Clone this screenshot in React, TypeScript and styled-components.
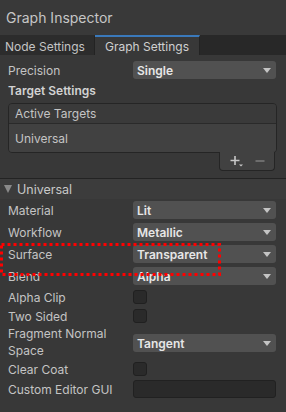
import React from 'react';
import styled, { createGlobalStyle } from 'styled-components';

const GlobalStyle = createGlobalStyle`
  html, body {
    margin: 0;
    padding: 0;
    background: #383838;
  }
  * {
    box-sizing: border-box;
  }
`;

const Panel = styled.div`
  position: relative;
  width: 286px;
  height: 412px;
  overflow: hidden;
  background: #383838;
  font-family: Inter, 'Noto Sans', sans-serif;
  font-size: 12px;
  color: #c4c4c4;
`;

const TitleBar = styled.div`
  height: 35px;
  padding-left: 6px;
  display: flex;
  align-items: center;
  font-size: 14px;
  color: #c6c6c6;
  background: #393939;
`;

const TabBar = styled.div`
  height: 20px;
  display: flex;
  background: #282828;
`;

const Tab = styled.div<{ $active?: boolean }>`
  height: 20px;
  display: flex;
  align-items: center;
  white-space: nowrap;
  padding: ${({ $active }) => ($active ? '0 0 0 10px' : '0 0 0 5px')};
  width: ${({ $active }) => ($active ? '105px' : '95px')};
  background: ${({ $active }) => ($active ? '#383838' : '#2c2c2c')};
  border-top: 2px solid ${({ $active }) => ($active ? '#3a79bb' : 'transparent')};
  border-right: 1px solid #232323;
  font-size: 12px;
  color: ${({ $active }) => ($active ? '#d0d0d0' : '#c4c4c4')};
`;

const Content = styled.div`
  padding: 4px 0 0 0;
`;

const Row = styled.div<{ $h?: number }>`
  height: ${({ $h }) => $h ?? 22}px;
  display: flex;
  align-items: center;
  padding: 0 10px 0 8px;
`;

const Label = styled.div<{ $top?: boolean }>`
  width: 125px;
  flex-shrink: 0;
  line-height: 17px;
  white-space: nowrap;
  align-self: ${({ $top }) => ($top ? 'flex-start' : 'auto')};
  color: #c4c4c4;
`;

const Dropdown = styled.div`
  flex: 1;
  height: 18px;
  border-radius: 3px;
  background: #515151;
  display: flex;
  align-items: center;
  justify-content: space-between;
  padding: 0 5px 0 4px;
  font-weight: 600;
  color: #e6e6e6;
`;

const Arrow = styled.span`
  width: 0;
  height: 0;
  border-left: 4px solid transparent;
  border-right: 4px solid transparent;
  border-top: 5px solid #c4c4c4;
`;

const Checkbox = styled.div`
  width: 14px;
  height: 14px;
  border-radius: 3px;
  background: #2a2a2a;
  border: 1px solid #202020;
`;

const TextField = styled.div`
  flex: 1;
  height: 18px;
  border-radius: 3px;
  background: #2a2a2a;
  border: 1px solid #212121;
`;

const SectionTitle = styled.div`
  height: 18px;
  padding-left: 8px;
  display: flex;
  align-items: center;
  font-weight: 600;
  color: #d2d2d2;
`;

const TargetList = styled.div`
  margin: 4px 9px 0 8px;
`;

const ListBox = styled.div`
  border: 1px solid #252525;
  border-radius: 4px;
  overflow: hidden;
`;

const ListHeader = styled.div`
  height: 20px;
  padding-left: 6px;
  display: flex;
  align-items: center;
  background: #3a3a3a;
  border-bottom: 1px solid #2a2a2a;
`;

const ListBody = styled.div`
  height: 28px;
  padding-left: 6px;
  display: flex;
  align-items: center;
  background: #414141;
`;

const ListFooter = styled.div`
  display: flex;
  justify-content: flex-end;
  padding-right: 2px;
`;

const FooterButtons = styled.div`
  width: 56px;
  height: 19px;
  margin-top: -1px;
  background: #414141;
  border: 1px solid #252525;
  border-top: none;
  border-radius: 0 0 4px 4px;
  display: flex;
  align-items: center;
  justify-content: space-around;
  padding: 0 4px;
`;

const IconButton = styled.span<{ $disabled?: boolean }>`
  display: flex;
  align-items: center;
  color: ${({ $disabled }) => ($disabled ? '#787878' : '#c8c8c8')};
`;

const Divider = styled.div`
  height: 1px;
  margin-top: 7px;
  background: #232323;
`;

const Foldout = styled.div`
  height: 20px;
  display: flex;
  align-items: center;
  gap: 4px;
  padding-left: 4px;
  background: #3c3c3c;
  font-size: 12.5px;
  color: #c8c8c8;
`;

const FoldArrow = styled.span`
  width: 0;
  height: 0;
  border-left: 4.5px solid transparent;
  border-right: 4.5px solid transparent;
  border-top: 8px solid #8a8a8a;
  margin-right: 1px;
`;

const Highlight = styled.svg`
  position: absolute;
  left: 0;
  top: 243px;
  width: 222px;
  height: 34px;
  pointer-events: none;
`;

const DropRow: React.FC<{ label: string; value: string }> = ({ label, value }) => (
  <Row>
    <Label>{label}</Label>
    <Dropdown>
      {value}
      <Arrow />
    </Dropdown>
  </Row>
);

const CheckRow: React.FC<{ label: string; h: number }> = ({ label, h }) => (
  <Row $h={h}>
    <Label>{label}</Label>
    <Checkbox />
  </Row>
);

export default function App() {
  return (
    <Panel>
      <GlobalStyle />
      <TitleBar>Graph Inspector</TitleBar>
      <TabBar>
        <Tab>Node Settings</Tab>
        <Tab $active>Graph Settings</Tab>
      </TabBar>

      <Content>
        <DropRow label="Precision" value="Single" />
        <SectionTitle>Target Settings</SectionTitle>

        <TargetList>
          <ListBox>
            <ListHeader>Active Targets</ListHeader>
            <ListBody>Universal</ListBody>
          </ListBox>
          <ListFooter>
            <FooterButtons>
              <IconButton>
                <svg width="14" height="12" viewBox="0 0 14 12">
                  <path d="M5 1v9M0.5 5.5h9" stroke="currentColor" strokeWidth="1.6" />
                  <path d="M9 9.5h4l-2 2z" fill="currentColor" />
                </svg>
              </IconButton>
              <IconButton $disabled>
                <svg width="10" height="10" viewBox="0 0 10 10">
                  <path d="M0.5 5h9" stroke="currentColor" strokeWidth="1.6" />
                </svg>
              </IconButton>
            </FooterButtons>
          </ListFooter>
        </TargetList>

        <Divider />
        <Foldout>
          <FoldArrow />
          Universal
        </Foldout>

        <DropRow label="Material" value="Lit" />
        <DropRow label="Workflow" value="Metallic" />
        <DropRow label="Surface" value="Transparent" />
        <DropRow label="Blend" value="Alpha" />
        <CheckRow label="Alpha Clip" h={20} />
        <CheckRow label="Two Sided" h={18} />
        <Row $h={36}>
          <Label $top>
            Fragment Normal
            <br />
            Space
          </Label>
          <Dropdown>
            Tangent
            <Arrow />
          </Dropdown>
        </Row>
        <CheckRow label="Clear Coat" h={16} />
        <Row $h={24}>
          <Label>Custom Editor GUI</Label>
          <TextField />
        </Row>
      </Content>

      <Highlight viewBox="0 0 222 34">
        <rect
          x="1.5"
          y="1.5"
          width="218"
          height="30"
          fill="none"
          stroke="#ff0000"
          strokeWidth="3"
          strokeDasharray="3 3"
        />
      </Highlight>
    </Panel>
  );
}
